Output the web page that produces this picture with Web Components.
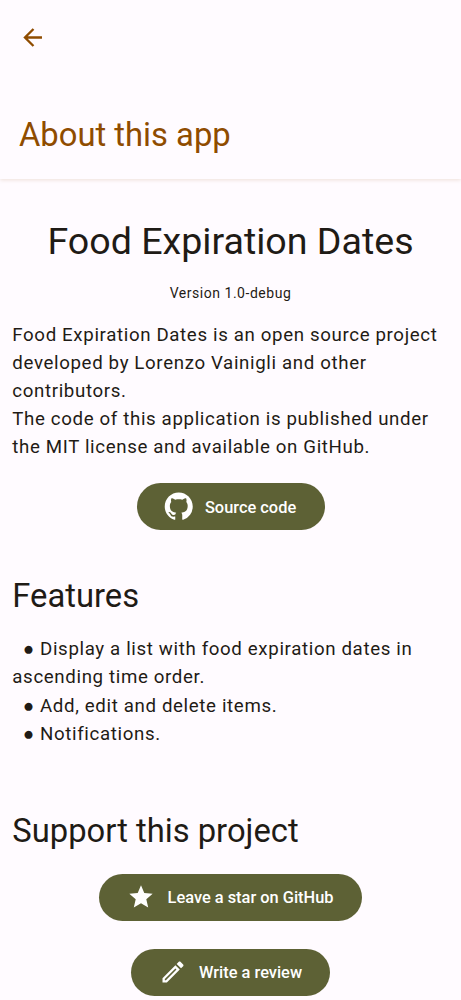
<!DOCTYPE html>
<html lang="en"><head><meta charset="utf-8"><title>About this app</title>
<style>html,body{margin:0;height:1000px;overflow:hidden;background:#fffbff}</style></head><body>
<about-page></about-page>
<script>
const define=(name,html)=>customElements.define(name,class extends HTMLElement{constructor(){super();this.attachShadow({mode:'open'}).innerHTML=html}});
define('top-bar',`<style>:host{display:block;box-sizing:border-box;height:179px;padding:23px 19px 0;color:#8f4c00;box-shadow:0 1px 4px #8f4c0028}
svg{display:block;width:28px;height:28px;fill:currentColor}h1{margin:64px 0 0;font-size:32.75px;font-weight:400;line-height:40px}</style>
<svg viewBox="0.3 -0.4 24 24"><path d="M20 11H7.83l5.59-5.59L12 4l-8 8 8 8 1.41-1.41L7.83 13H20v-2z"/></svg><h1><slot></slot></h1>`);
define('pill-button',`<style>:host{display:flex;align-items:center;justify-content:center;gap:12.4px;box-sizing:border-box;width:var(--w);height:47px;margin:0 auto;border-radius:24px;background:#5d6135;color:#fff;font-size:16.4px;font-weight:500;line-height:24px;white-space:nowrap}
::slotted(svg){width:28px;height:28px;fill:currentColor;flex:none;margin-left:-.3px}span{padding-top:2px}</style><slot name="icon"></slot><span><slot></slot></span>`);
define('section-title',`<style>:host{display:block;font-size:32.75px;line-height:40px;white-space:nowrap}</style><slot></slot>`);
define('body-text',`<style>:host{display:block;font-size:18.7px;line-height:28.1px;letter-spacing:.635px;white-space:pre}</style><slot></slot>`);
define('about-page',`<style>:host{display:block;font-family:Roboto,sans-serif;color:#1f1b16}
main{padding:0 12.3px}.name{margin-top:37px;text-align:center;font-size:37.6px;line-height:50px;white-space:nowrap}.version{margin-top:17px;text-align:center;font-size:14px;line-height:20px;letter-spacing:.53px}
.intro{margin-top:18px}.source{margin-top:21.8px}.features{margin-top:46px}.list{margin-top:19.1px}.support{margin-top:63.2px}.star{margin-top:23px}.review{margin-top:28px}</style>
<top-bar>About this app</top-bar><main><div class="name">Food Expiration Dates</div><div class="version">Version 1.0-debug</div>
<body-text class="intro">Food Expiration Dates is an open source project
developed by Lorenzo Vainigli and other
contributors.
The code of this application is published under
the MIT license and available on GitHub.</body-text>
<pill-button class="source" style="--w:188px"><svg slot="icon" viewBox="0.15 0.25 16 16" overflow="visible"><path d="M8 0C3.58 0 0 3.58 0 8c0 3.54 2.29 6.53 5.47 7.59.4.07.55-.17.55-.38 0-.19-.01-.82-.01-1.49-2.01.37-2.53-.49-2.69-.94-.09-.23-.48-.94-.82-1.13-.28-.15-.68-.52-.01-.53.63-.01 1.08.58 1.23.82.72 1.21 1.87.87 2.33.66.07-.52.28-.87.51-1.07-1.78-.2-3.64-.89-3.64-3.95 0-.87.31-1.59.82-2.15-.08-.2-.36-1.02.08-2.12 0 0 .67-.21 2.2.82.64-.18 1.32-.27 2-.27s1.36.09 2 .27c1.53-1.04 2.2-.82 2.2-.82.44 1.1.16 1.92.08 2.12.51.56.82 1.27.82 2.15 0 3.07-1.87 3.75-3.65 3.95.29.25.54.73.54 1.48 0 1.07-.01 1.93-.01 2.2 0 .21.15.46.55.38A8.01 8.01 0 0 0 16 8c0-4.42-3.58-8-8-8z"/></svg>Source code</pill-button>
<section-title class="features">Features</section-title>
<body-text class="list">  ● Display a list with food expiration dates in
ascending time order.
  ● Add, edit and delete items.
  ● Notifications.</body-text>
<section-title class="support">Support this project</section-title>
<pill-button class="star" style="--w:263px"><svg slot="icon" viewBox="0 0 24 24"><path d="M12 17.27 18.18 21l-1.64-7.03L22 9.24l-7.19-.61L12 2 9.19 8.63 2 9.24l5.46 4.73L5.82 21z"/></svg>Leave a star on GitHub</pill-button>
<pill-button class="review" style="--w:199.5px"><svg slot="icon" viewBox="0 0 24 24"><path d="M14.06 9.02l.92.92L5.92 19H5v-.92l9.06-9.06M17.66 3c-.25 0-.51.1-.7.29l-1.83 1.83 3.75 3.75 1.83-1.83c.39-.39.39-1.02 0-1.41l-2.34-2.34c-.2-.2-.45-.29-.71-.29zm-3.6 3.19L3 17.25V21h3.75L17.81 9.94l-3.75-3.75z"/></svg>Write a review</pill-button></main>`);
</script></body></html>
